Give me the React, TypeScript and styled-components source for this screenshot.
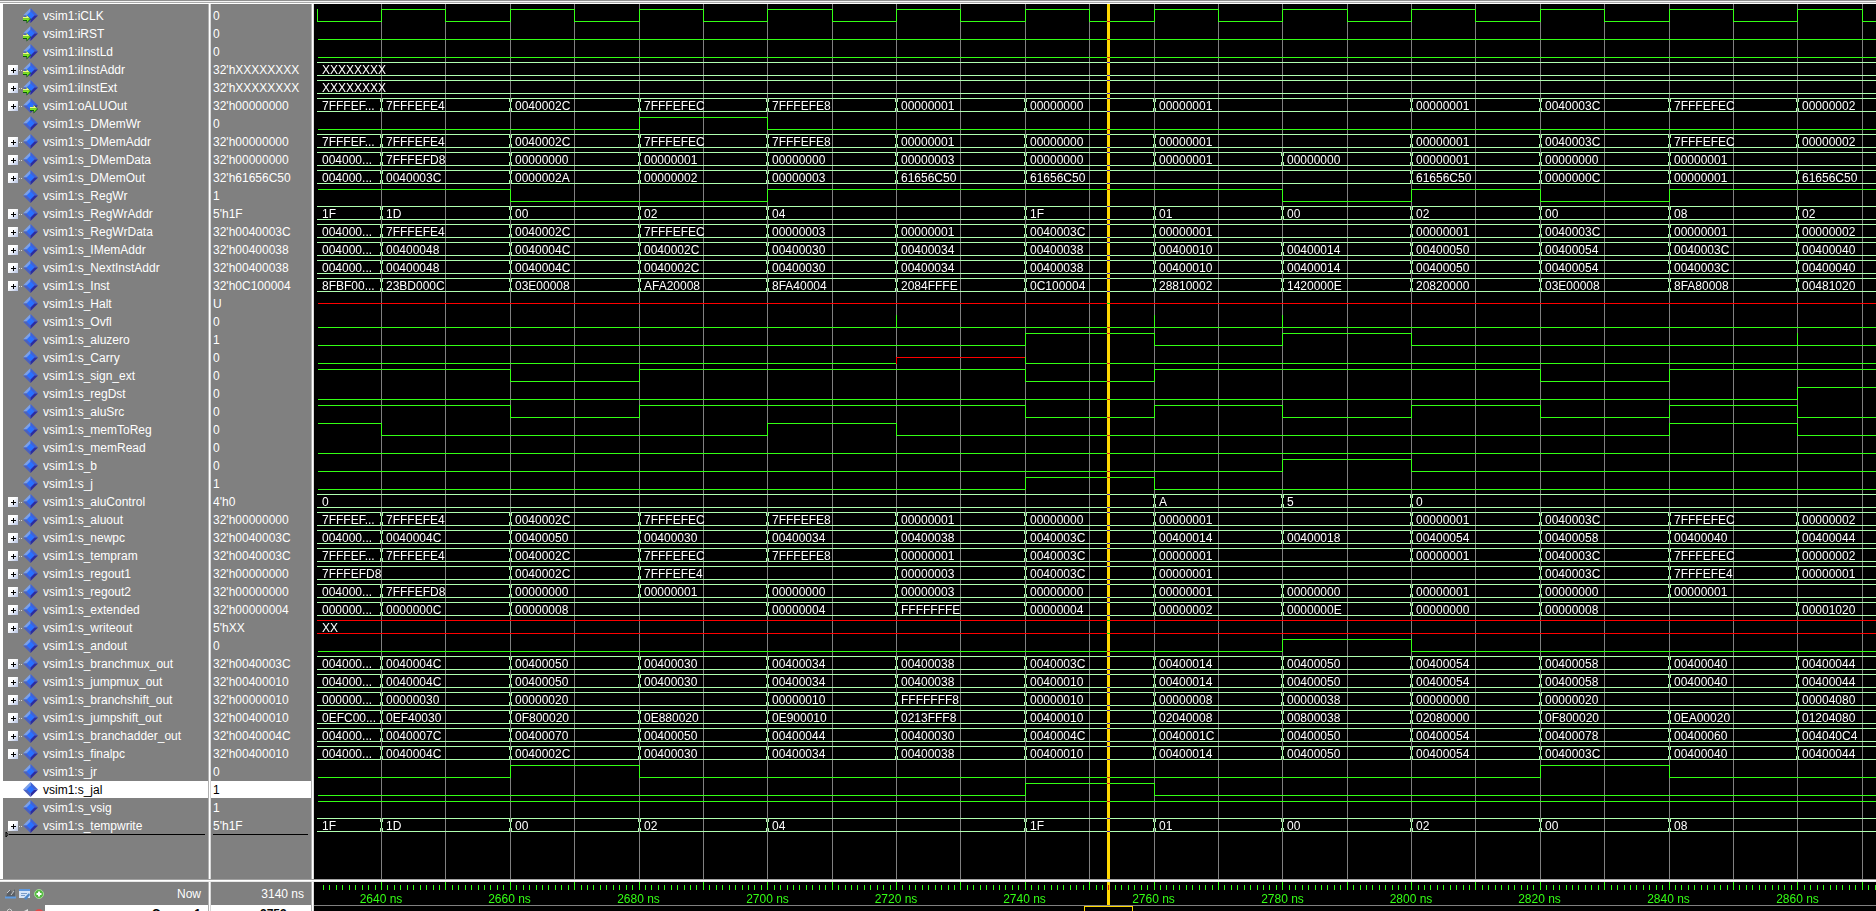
import React from 'react';
import styled, { createGlobalStyle } from 'styled-components';

const GlobalStyle = createGlobalStyle`
  *, *::before, *::after { box-sizing: border-box; }
  body { margin: 0; background: #808080; }
`;

const GREEN = '#33ff14';
const BUS = '#b0ffb0';
const RED = '#ff0000';
const GRID = '#808080';

/* ---------- time scale ---------- */
const ORIGIN = 67;
const PX_PER_NS = 6.438;
const FIRST = 2630;
const xAt = (t: number) => Math.round((t - 2640) * PX_PER_NS) + ORIGIN;
const range = (from: number, to: number, step: number) => {
  const out: number[] = [];
  for (let t = from; t <= to; t += step) out.push(t);
  return out;
};

/* ---------- signals ---------- */
type Level = 'l' | 'h' | 'u';
type Signal = {
  name: string;
  value: string;
  port?: 'in' | 'out';
  bus?: string;
  color?: string;
  wave?: string;
  spikes?: number[];
  edgeAtStart?: boolean;
  selected?: boolean;
};

const COLUMNS = [2630, 2640, 2660, 2680, 2700, 2720, 2740, 2760, 2780, 2800, 2820, 2840, 2860];

const ALU = '7FFFEF... 7FFFEFE4 0040002C 7FFFEFEC 7FFFEFE8 00000001 00000000 00000001 - 00000001 0040003C 7FFFEFEC 00000002';
const REG2 = '004000... 7FFFEFD8 00000000 00000001 00000000 00000003 00000000 00000001 00000000 00000001 00000000 00000001 -';
const FETCH = '004000... 00400048 0040004C 0040002C 00400030 00400034 00400038 00400010 00400014 00400050 00400054 0040003C 00400040';
const CLOCK = range(2630, 2870, 10).map((t, i) => (i % 2 ? 'h' : 'l') + t).join(' ');

const SIGNALS: Signal[] = [
  { name: 'iCLK', value: '0', port: 'in', wave: CLOCK, edgeAtStart: true },
  { name: 'iRST', value: '0', port: 'in', wave: 'l2630' },
  { name: 'iInstLd', value: '0', port: 'in', wave: 'l2630' },
  { name: 'iInstAddr', value: "32'hXXXXXXXX", port: 'in', bus: 'XXXXXXXX' },
  { name: 'iInstExt', value: "32'hXXXXXXXX", port: 'in', bus: 'XXXXXXXX' },
  { name: 'oALUOut', value: "32'h00000000", port: 'out', bus: ALU },
  { name: 's_DMemWr', value: '0', wave: 'l2630 h2680 l2700' },
  { name: 's_DMemAddr', value: "32'h00000000", bus: ALU },
  { name: 's_DMemData', value: "32'h00000000", bus: REG2 },
  { name: 's_DMemOut', value: "32'h61656C50", bus: '004000... 0040003C 0000002A 00000002 00000003 61656C50 61656C50 - - 61656C50 0000000C 00000001 61656C50' },
  { name: 's_RegWr', value: '1', wave: 'h2630 l2660 h2700 l2780 h2800 l2820 h2840' },
  { name: 's_RegWrAddr', value: "5'h1F", bus: '1F 1D 00 02 04 - 1F 01 00 02 00 08 02' },
  { name: 's_RegWrData', value: "32'h0040003C", bus: '004000... 7FFFEFE4 0040002C 7FFFEFEC 00000003 00000001 0040003C 00000001 - 00000001 0040003C 00000001 00000002' },
  { name: 's_IMemAddr', value: "32'h00400038", bus: FETCH },
  { name: 's_NextInstAddr', value: "32'h00400038", bus: FETCH },
  { name: 's_Inst', value: "32'h0C100004", bus: '8FBF00... 23BD000C 03E00008 AFA20008 8FA40004 2084FFFE 0C100004 28810002 1420000E 20820000 03E00008 8FA80008 00481020' },
  { name: 's_Halt', value: 'U', wave: 'u2630' },
  { name: 's_Ovfl', value: '0', wave: 'l2630', spikes: [2720, 2760, 2780] },
  { name: 's_aluzero', value: '1', wave: 'l2630 h2740 l2760 h2780 l2800', spikes: [2860] },
  { name: 's_Carry', value: '0', wave: 'l2630 u2720 l2740' },
  { name: 's_sign_ext', value: '0', wave: 'h2630 l2660 h2680 l2740 h2760 l2820 h2840' },
  { name: 's_regDst', value: '0', wave: 'l2630 h2860' },
  { name: 's_aluSrc', value: '0', wave: 'h2630 l2660 h2680 l2740 h2760 l2780 h2800 l2820 h2840 l2860' },
  { name: 's_memToReg', value: '0', wave: 'h2630 l2640 h2700 l2720 h2840 l2860' },
  { name: 's_memRead', value: '0', wave: 'l2630' },
  { name: 's_b', value: '0', wave: 'l2630 h2780 l2800' },
  { name: 's_j', value: '1', wave: 'l2630 h2740 l2760' },
  { name: 's_aluControl', value: "4'h0", bus: '0 - - - - - - A 5 0' },
  { name: 's_aluout', value: "32'h00000000", bus: ALU },
  { name: 's_newpc', value: "32'h0040003C", bus: '004000... 0040004C 00400050 00400030 00400034 00400038 0040003C 00400014 00400018 00400054 00400058 00400040 00400044' },
  { name: 's_tempram', value: "32'h0040003C", bus: '7FFFEF... 7FFFEFE4 0040002C 7FFFEFEC 7FFFEFE8 00000001 0040003C 00000001 - 00000001 0040003C 7FFFEFEC 00000002' },
  { name: 's_regout1', value: "32'h00000000", bus: '7FFFEFD8 - 0040002C 7FFFEFE4 - 00000003 0040003C 00000001 - - 0040003C 7FFFEFE4 00000001' },
  { name: 's_regout2', value: "32'h00000000", bus: REG2 },
  { name: 's_extended', value: "32'h00000004", bus: '000000... 0000000C 00000008 - 00000004 FFFFFFFE 00000004 00000002 0000000E 00000000 00000008 - 00001020' },
  { name: 's_writeout', value: "5'hXX", bus: 'XX', color: RED },
  { name: 's_andout', value: '0', wave: 'l2630 h2780 l2800' },
  { name: 's_branchmux_out', value: "32'h0040003C", bus: '004000... 0040004C 00400050 00400030 00400034 00400038 0040003C 00400014 00400050 00400054 00400058 00400040 00400044' },
  { name: 's_jumpmux_out', value: "32'h00400010", bus: '004000... 0040004C 00400050 00400030 00400034 00400038 00400010 00400014 00400050 00400054 00400058 00400040 00400044' },
  { name: 's_branchshift_out', value: "32'h00000010", bus: '000000... 00000030 00000020 - 00000010 FFFFFFF8 00000010 00000008 00000038 00000000 00000020 - 00004080' },
  { name: 's_jumpshift_out', value: "32'h00400010", bus: '0EFC00... 0EF40030 0F800020 0E880020 0E900010 0213FFF8 00400010 02040008 00800038 02080000 0F800020 0EA00020 01204080' },
  { name: 's_branchadder_out', value: "32'h0040004C", bus: '004000... 0040007C 00400070 00400050 00400044 00400030 0040004C 0040001C 00400050 00400054 00400078 00400060 004040C4' },
  { name: 's_finalpc', value: "32'h00400010", bus: '004000... 0040004C 0040002C 00400030 00400034 00400038 00400010 00400014 00400050 00400054 0040003C 00400040 00400044' },
  { name: 's_jr', value: '0', wave: 'l2630 h2660 l2680 h2820 l2840' },
  { name: 's_jal', value: '1', wave: 'l2630 h2740 l2760', selected: true },
  { name: 's_vsig', value: '1', wave: 'h2630' },
  { name: 's_tempwrite', value: "5'h1F", bus: '1F 1D 00 02 04 - 1F 01 00 02 00 08' },
];

/* ---------- frame ---------- */
const Window = styled.main`
  display: flex;
  flex-direction: column;
  height: 100vh;
  overflow: hidden;
  background: #808080;
  color: #fff;
  font: 12px/18px "Liberation Sans", Arial, sans-serif;
  white-space: pre;
`;
const TopEdge = styled.div`
  flex: none;
  height: 4px;
  background: linear-gradient(#909090 0 1px, #f4f4f4 1px 2px, #a8a8a8 2px 3px, #fff 3px 4px);
`;
const Columns = styled.div<{ $footer?: boolean }>`
  display: grid;
  grid-template-columns: 208px 3px 100px 3px minmax(0, 1fr);
  flex: ${(p) => (p.$footer ? 'none' : '1')};
  height: ${(p) => (p.$footer ? '29px' : 'auto')};
  min-height: 0;
  overflow: hidden;
`;
const ColumnSplitter = styled.div`
  background: linear-gradient(to right, #b0b0b0 0 1px, #fff 1px 2px, #d8d8d8 2px 3px);
`;
const RowSplitter = styled.div`
  flex: none;
  height: 3px;
  background: linear-gradient(#a0a0a0 0 1px, #fff 1px 2px, #e8e8e8 2px 3px);
`;

/* ---------- name and value columns ---------- */
const NamePane = styled.div`
  border-left: 3px solid #fff;
  padding-top: 3px;
  min-height: 0;
  overflow: hidden;
`;
const ValuePane = styled.div`
  padding-top: 3px;
  min-height: 0;
  overflow: hidden;
`;
const List = styled.ul`
  list-style: none;
  margin: 0;
  padding: 0;
`;
const NameRow = styled.li<{ $selected?: boolean }>`
  display: flex;
  align-items: flex-start;
  height: 18px;
  padding-left: 5px;
  border-bottom: 1px solid #808080;
  background: ${(p) => (p.$selected ? '#fff' : 'transparent')};
  color: ${(p) => (p.$selected ? '#000' : '#fff')};
`;
const ValueRow = styled(NameRow)`
  padding-left: 2px;
`;
const ExpandSlot = styled.div`
  display: flex;
  align-items: center;
  width: 15px;
  height: 18px;
`;
const ExpandButton = styled.button`
  display: flex;
  width: 10px;
  height: 10px;
  padding: 0;
  border: 0;
  background: linear-gradient(135deg, #fff 40%, #b4c2e4);
`;
const Dots = styled.span`
  width: 5px;
  height: 1px;
  background: repeating-linear-gradient(to right, transparent 0 1px, #d8d8d8 1px 2px);
`;
const SignalName = styled.span`
  margin-left: 5px;
`;
const InsertLine = styled.div`
  display: flex;
  align-items: center;
  height: 7px;
  margin: -4px 3px 0 2px;
  &::after {
    content: '';
    flex: 1;
    height: 1px;
    background: #000;
  }
`;

/* ---------- waveform area ---------- */
const WavePane = styled.div`
  position: relative;
  isolation: isolate;
  min-height: 0;
  padding-top: 3px;
  overflow: hidden;
  background: #000;
`;
const GridLines = styled.svg`
  position: absolute;
  inset: 0;
  width: 100%;
  height: 100%;
`;
const WaveList = styled(List)`
  position: relative;
`;
const WaveRow = styled.li`
  display: flex;
  height: 18px;
  overflow: hidden;
`;
const Trace = styled.svg`
  display: block;
  flex: 1;
  height: 18px;
`;
const BusLine = styled.div`
  display: flex;
  flex: 1;
  margin-left: 3px;
`;
const BusCell = styled.div<{ $color: string; $last: boolean }>`
  position: relative;
  flex: ${(p) => (p.$last ? '1 0 0' : 'none')};
  height: 14px;
  margin-top: 1px;
  padding-left: 5px;
  border: solid ${(p) => p.$color};
  border-width: 1px 0;
  line-height: 14px;
`;
const Crossing = styled.svg`
  position: absolute;
  left: -1px;
  top: -1px;
`;
const Cursor = styled.div`
  position: absolute;
  top: 0;
  bottom: 0;
  width: 3px;
  background: #ffd700;
  mix-blend-mode: difference;
`;

/* ---------- footer ---------- */
const FooterCell = styled.div`
  display: grid;
  grid-template-rows: 23px 6px;
`;
const FooterTop = styled.div`
  display: flex;
  align-items: center;
  justify-content: space-between;
  padding: 0 7px 0 5px;
`;
const FooterNext = styled.div`
  display: flex;
  justify-content: space-between;
  overflow: hidden;
`;
const CursorCell = styled.div`
  flex: 1;
  padding-right: 7px;
  background: #fff;
  color: #000;
  font-weight: bold;
  text-align: right;
`;
const NextIcons = styled.div`
  display: flex;
  width: 45px;
`;
const Timeline = styled.div`
  position: relative;
  isolation: isolate;
  display: grid;
  grid-template-rows: 23px 1px 5px;
  overflow: hidden;
  background: #000;
  color: ${GREEN};
`;
const Ruler = styled.div`
  position: relative;
  display: flex;
  padding: 8px 0 0 3px;
  overflow: hidden;
`;
const Ticks = styled.svg`
  position: absolute;
  left: 0;
  top: 0;
  width: 100%;
  height: 9px;
`;
const TimeLabel = styled.span`
  flex: none;
  text-align: center;
`;
const Baseline = styled.div`
  background: ${GRID};
`;
const CursorBox = styled.div`
  width: 49px;
  height: 18px;
  border: 1px solid #ffd700;
`;

/* ---------- drawings ---------- */
const Arrow = ({ x, y }: { x: number; y: number }) => (
  <g transform={`translate(${x} ${y})`}>
    <path d="M0 2.500h3.500V0L8 4 3.500 8.500V6H0z" fill="#0a5a0c" />
    <path d="M0 2h3.500V0L7 3.500H0z" fill="#f0ff80" />
    <path d="M0 3.500h7.500L4 7V5H0z" fill="#7be81c" />
  </g>
);

const SignalIcon = ({ port }: { port?: 'in' | 'out' }) => (
  <svg width="15" height="17" viewBox="0 0 15 17" aria-hidden="true">
    <path d="M7.500 1L0 8.500h7.500z" fill="#7ba0ea" />
    <path d="M7.500 1L15 8.500H7.500z" fill="#3f62d6" />
    <path d="M0 8.500L7.500 16V8.500z" fill="#4a60c0" />
    <path d="M15 8.500L7.500 16V8.500z" fill="#2b2ba0" />
    <path d="M7.500 4.500l4 4-4 4-4-4z" fill="#2a70ff" />
    {port && <Arrow x={port === 'in' ? 0 : 7} y={8} />}
  </svg>
);

const PlusGlyph = () => (
  <svg width="10" height="10" viewBox="0 0 10 10" shapeRendering="crispEdges" aria-hidden="true">
    <path d="M3 5h5v1H3zM5 3h1v5H5z" fill="#000" />
  </svg>
);

const CrossingMark = ({ color }: { color: string }) => (
  <Crossing width="3" height="14" viewBox="0 0 3 14" shapeRendering="crispEdges" aria-hidden="true">
    <path d="M0 0h3v4H0zM0 10h3v4H0zM1 4h1v6H1z" fill={color} />
    <path d="M1 0h1v4H1zM1 10h1v4H1z" fill={GRID} />
  </Crossing>
);

const LEVEL_Y: Record<Level, number> = { h: 2, u: 8, l: 14 };

const WaveTrace = ({ signal }: { signal: Signal }) => {
  const steps = signal.wave!.split(' ').map((s) => ({ level: s[0] as Level, t: Number(s.slice(1)) }));
  return (
    <Trace shapeRendering="crispEdges" aria-hidden="true">
      {steps.map((step, i) => {
        const y = LEVEL_Y[step.level];
        const start = xAt(step.t);
        const x = i === 0 && !signal.edgeAtStart ? start + 1 : start;
        const end = i + 1 < steps.length ? xAt(steps[i + 1].t) : 4000;
        const from = i > 0 ? LEVEL_Y[steps[i - 1].level] : signal.edgeAtStart ? LEVEL_Y.h : y;
        const color = step.level === 'u' ? RED : GREEN;
        return (
          <g key={step.t} fill={color}>
            <rect x={x} y={y} width={end - x} height={1} />
            {from !== y && <rect x={x} y={Math.min(from, y)} width={1} height={Math.abs(from - y) + 1} />}
          </g>
        );
      })}
      {signal.spikes?.map((t) => (
        <rect key={t} x={xAt(t)} y={2} width={1} height={13} fill={GREEN} />
      ))}
    </Trace>
  );
};

const BusTrace = ({ signal }: { signal: Signal }) => {
  const color = signal.color ?? BUS;
  const cells = signal
    .bus!.split(' ')
    .map((text, i) => ({ text, t: COLUMNS[i] }))
    .filter((c) => c.text !== '-');
  return (
    <BusLine>
      {cells.map((cell, i) => {
        const next = cells[i + 1];
        return (
          <BusCell
            key={cell.t}
            $color={color}
            $last={!next}
            style={next && { width: xAt(next.t) - xAt(cell.t) }}
          >
            {i > 0 && <CrossingMark color={color} />}
            {cell.text}
          </BusCell>
        );
      })}
    </BusLine>
  );
};

const FooterIcons = () => (
  <svg width="40" height="14" viewBox="0 0 40 14" aria-hidden="true">
    <path d="M1 10l2-6 3-1 1 3 3-4v8z" fill="#5c6066" />
    <path d="M2 6l3-3M6 8l3-4" stroke="#c8ccd0" />
    <path d="M0 10.500h11" stroke="#5e9be0" strokeWidth="2" />
    <rect x="14" y="2" width="11" height="9" fill="#d6e4f8" />
    <rect x="14" y="2" width="11" height="2" fill="#5f97dc" />
    <path d="M16 6.500h6M16 8.500h4" stroke="#7a9cc8" />
    <path d="M19 11l5-5 1 2-4 5z" fill="#4f87c8" />
    <circle cx="34" cy="7" r="4.500" fill="#52b83e" stroke="#a4dc98" />
    <path d="M31.500 7h5M34 4.500v5" stroke="#fff" strokeWidth="2" />
  </svg>
);

const CursorIcons = () => (
  <svg width="45" height="6" viewBox="0 0 45 6" aria-hidden="true">
    <path d="M7.500 6V5q2-2 4 0v1" fill="none" stroke="#d0d0d0" />
    <path d="M24 6l4-2v2z" fill="#e0e0e0" />
    <path d="M35 6q4-4 8 0z" fill="#e04a4a" />
  </svg>
);

const cursorLeft = { left: xAt(2753) - 1 };

export default function App() {
  return (
    <Window>
      <GlobalStyle />
      <TopEdge />
      <Columns>
        <NamePane>
          <List>
            {SIGNALS.map((s) => (
              <NameRow key={s.name} $selected={s.selected}>
                <ExpandSlot>
                  {s.bus && (
                    <>
                      <ExpandButton aria-label={`Expand ${s.name}`}>
                        <PlusGlyph />
                      </ExpandButton>
                      <Dots />
                    </>
                  )}
                </ExpandSlot>
                <SignalIcon port={s.port} />
                <SignalName>vsim1:{s.name}</SignalName>
              </NameRow>
            ))}
          </List>
          <InsertLine>
            <svg width="4" height="7" viewBox="0 0 4 7" aria-hidden="true">
              <path d="M1 1v5l2-2.500z" fill="none" stroke="#000" />
            </svg>
          </InsertLine>
        </NamePane>
        <ColumnSplitter />
        <ValuePane>
          <List>
            {SIGNALS.map((s) => (
              <ValueRow key={s.name} $selected={s.selected}>
                {s.value}
              </ValueRow>
            ))}
          </List>
          <InsertLine />
        </ValuePane>
        <ColumnSplitter />
        <WavePane>
          <GridLines shapeRendering="crispEdges" aria-hidden="true">
            {range(2640, 2870, 10).map((t) => (
              <rect key={t} x={xAt(t)} y="0" width="1" height="100%" fill={GRID} />
            ))}
          </GridLines>
          <WaveList>
            {SIGNALS.map((s) => (
              <WaveRow key={s.name}>{s.bus ? <BusTrace signal={s} /> : <WaveTrace signal={s} />}</WaveRow>
            ))}
          </WaveList>
          <Cursor style={cursorLeft} />
        </WavePane>
      </Columns>
      <RowSplitter />
      <Columns $footer>
        <FooterCell>
          <FooterTop>
            <FooterIcons />
            <span>Now</span>
          </FooterTop>
          <FooterNext>
            <NextIcons>
              <CursorIcons />
            </NextIcons>
            <CursorCell>Cursor 1</CursorCell>
          </FooterNext>
        </FooterCell>
        <ColumnSplitter />
        <FooterCell>
          <FooterTop>
            <span />
            <span>3140 ns</span>
          </FooterTop>
          <FooterNext>
            <CursorCell>2753 ns</CursorCell>
          </FooterNext>
        </FooterCell>
        <ColumnSplitter />
        <Timeline>
          <Ruler>
            <Ticks shapeRendering="crispEdges" aria-hidden="true">
              {range(FIRST + 1, 2872, 1).map((t) => (
                <rect
                  key={t}
                  x={xAt(t)}
                  y={t % 10 ? 3 : 0}
                  width="1"
                  height={t % 10 ? 5 : 8}
                  fill={GREEN}
                />
              ))}
            </Ticks>
            {range(2640, 2860, 20).map((t) => (
              <TimeLabel key={t} style={{ width: xAt(t + 10) - xAt(t - 10) }}>
                {t} ns
              </TimeLabel>
            ))}
            <Cursor style={cursorLeft} />
          </Ruler>
          <Baseline />
          <CursorBox style={{ marginLeft: xAt(2753) - 24 }} />
        </Timeline>
      </Columns>
    </Window>
  );
}
